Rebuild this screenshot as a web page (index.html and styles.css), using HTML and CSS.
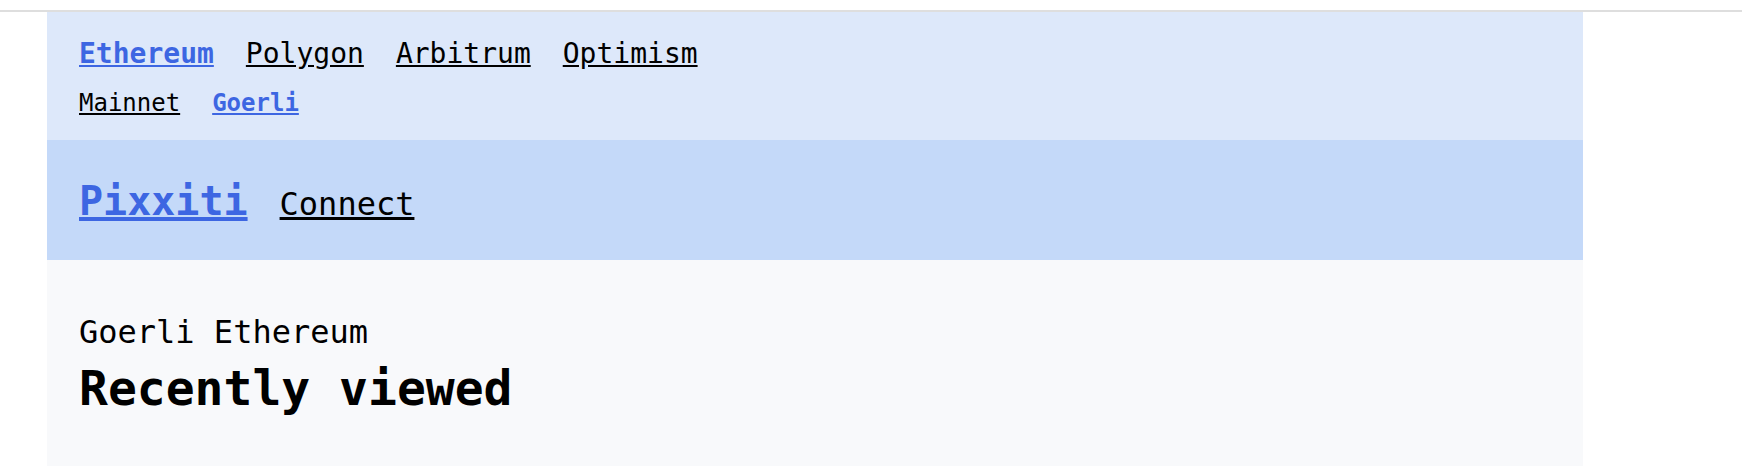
FILE: index.html
```html
<!DOCTYPE html>
<html lang="en">
<head>
<meta charset="utf-8">
<title>Pixxiti</title>
<link rel="stylesheet" href="styles.css">
</head>
<body>
<div class="page">
  <div class="container">
    <nav class="chains">
      <div class="chain-row">
        <a href="#" class="link active">Ethereum</a>
        <a href="#" class="link">Polygon</a>
        <a href="#" class="link">Arbitrum</a>
        <a href="#" class="link">Optimism</a>
      </div>
      <div class="net-row">
        <a href="#" class="link">Mainnet</a>
        <a href="#" class="link active">Goerli</a>
      </div>
    </nav>
    <header class="brand-bar">
      <a href="#" class="brand">Pixxiti</a>
      <a href="#" class="connect">Connect</a>
    </header>
    <main class="content">
      <p class="network">Goerli Ethereum</p>
      <h1 class="title">Recently viewed</h1>
    </main>
  </div>
</div>
</body>
</html>
```
FILE: styles.css
```css
html, body {
  margin: 0;
  padding: 0;
  background: #ffffff;
}
body {
  padding-top: 10px;
  font-family: "DejaVu Sans Mono", monospace;
  color: #000000;
}
.page {
  border-top: 2px solid #dedede;
}
.container {
  width: 1536px;
  margin-left: 47px;
  display: flex;
  flex-direction: column;
}
.link {
  color: #000000;
  text-decoration: underline;
}
.link.active {
  color: #3d66e2;
  font-weight: bold;
}
.chains {
  background: #dde8fa;
  padding: 22px 32px 20px 32px;
  display: flex;
  flex-direction: column;
  gap: 13px;
  height: 128px;
  box-sizing: border-box;
}
.chain-row {
  display: flex;
  gap: 32px;
  font-size: 28px;
  line-height: 40px;
}
.net-row {
  display: flex;
  gap: 32px;
  font-size: 24px;
  line-height: 32px;
}
.brand-bar {
  background: #c4d9f9;
  height: 120px;
  box-sizing: border-box;
  padding: 2px 32px 0 32px;
  display: flex;
  align-items: center;
  gap: 32px;
}
.brand {
  color: #3d66e2;
  font-weight: bold;
  font-size: 40px;
  line-height: 56px;
  text-decoration: underline;
}
.connect {
  color: #000000;
  font-size: 32px;
  line-height: 48px;
  text-decoration: underline;
  position: relative;
  top: 3px;
}
.content {
  background: #f8f9fb;
  padding: 48px 32px 46px 32px;
}
.network {
  margin: 0;
  font-size: 32px;
  line-height: 48px;
}
.title {
  margin: 0;
  font-size: 48px;
  line-height: 64px;
  font-weight: bold;
}
```
